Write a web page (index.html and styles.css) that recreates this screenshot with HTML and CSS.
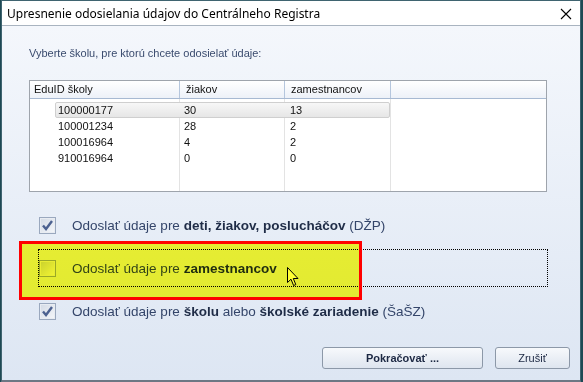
FILE: index.html
```html
<!DOCTYPE html>
<html lang="sk">
  <head>
    <meta charset="UTF-8" />
    <title>Upresnenie odosielania údajov do Centrálneho Registra</title>
    <link rel="stylesheet" href="styles.css">
  </head>
  <body>
    <div class="window">
      <div class="titlebar">
        <span class="title">Upresnenie odosielania údajov do Centrálneho Registra</span>
        <svg class="close" width="12" height="12" viewBox="0 0 12 12">
          <path d="M1 1 L11 11 M11 1 L1 11" stroke="#000" stroke-width="1.1" fill="none" />
        </svg>
      </div>
      <div class="client">
        <p class="hint">Vyberte školu, pre ktorú chcete odosielať údaje:</p>

        <div class="listview">
          <div class="lv-head">
            <div class="col c1">EduID školy</div>
            <div class="col c2">žiakov</div>
            <div class="col c3">zamestnancov</div>
            <div class="col fill"></div>
          </div>
          <div class="lv-body">
            <div class="row hot"><span>100000177</span><span>30</span><span>13</span></div>
            <div class="row"><span>100001234</span><span>28</span><span>2</span></div>
            <div class="row"><span>100016964</span><span>4</span><span>2</span></div>
            <div class="row"><span>910016964</span><span>0</span><span>0</span></div>
          </div>
        </div>

        <div class="options">
          <label class="opt">
            <span class="box checked">
              <svg width="15" height="15" viewBox="0 0 15 15"><path d="M3 7.5 L6 11 L12 3" /></svg>
            </span>
            <span class="text">Odoslať údaje pre <b>deti, žiakov, poslucháčov</b> (DŽP)</span>
          </label>
          <label class="opt focused">
            <span class="box"></span>
            <span class="text">Odoslať údaje pre <b>zamestnancov</b></span>
            <!-- mouse pointer -->
            <svg class="pointer" width="13" height="20" viewBox="0 0 13 20">
              <path d="M0.5 0.5 L0.5 15.5 L4 12.2 L6.6 18.5 L8.8 17.6 L6.3 11.5 L11 11.5 Z" fill="#fff" stroke="#000" stroke-width="1" stroke-linejoin="miter" />
            </svg>
            <!-- highlighter annotation -->
            <span class="mark"></span>
          </label>
          <label class="opt">
            <span class="box checked">
              <svg width="15" height="15" viewBox="0 0 15 15"><path d="M3 7.5 L6 11 L12 3" /></svg>
            </span>
            <span class="text">Odoslať údaje pre <b>školu</b> alebo <b>školské zariadenie</b> (ŠaŠZ)</span>
          </label>
        </div>

        <div class="buttons">
          <button class="btn primary" type="button">Pokračovať ...</button>
          <button class="btn cancel" type="button">Zrušiť</button>
        </div>
      </div>
    </div>
  </body>
</html>
```

FILE: styles.css
```css
body {
  margin: 0;
  background-color: #1e4954;
  font-family: "Liberation Sans", Arial, sans-serif;
}
.window {
  width: 580px;
  height: 382px;
  margin-left: 1px;
  box-sizing: border-box;
  border: 1px solid #3f6470;
  border-bottom: 2px solid #6d7784;
  display: flex;
  flex-direction: column;
}
.titlebar {
  height: 24px;
  background-color: #ffffff;
  border-bottom: 1px solid #a9b4c0;
  display: flex;
  align-items: center;
  justify-content: space-between;
  padding: 0 8px 0 5px;
}
.title {
  font-family: "Noto Sans", sans-serif;
  font-size: 12px;
  color: #000;
  margin-top: 1px;
}
.close {
  display: block;
  margin-top: 1px;
}
.client {
  flex: 1;
  display: flex;
  flex-direction: column;
  padding: 0 10px 11px 27px;
  background: linear-gradient(#f4f7fc, #dde6f3);
}
.hint {
  margin: 21px 0 0 0;
  font-size: 11px;
  line-height: 13px;
  color: #3a4b6e;
}

/* list view */
.listview {
  margin-top: 20px;
  width: 518px;
  height: 112px;
  box-sizing: border-box;
  border: 1px solid #9ea4ac;
  background-color: #fff;
  display: flex;
  flex-direction: column;
  font-size: 11px;
  color: #111;
}
.lv-head {
  display: flex;
  height: 17px;
  background: linear-gradient(#ffffff, #edf1f8);
  border-bottom: 1px solid #a7b9d2;
}
.col {
  box-sizing: border-box;
  border-right: 1px solid #b5c6dd;
  line-height: 17px;
  padding-left: 6px;
}
.c1 { width: 150px; padding-left: 4px; }
.c2 { width: 105px; }
.c3 { width: 106px; }
.fill { flex: 1; border-right: none; }
.lv-body {
  flex: 1;
  padding-top: 3px;
  background:
    linear-gradient(#e3e3e3, #e3e3e3) 149px 0 / 1px 100% no-repeat,
    linear-gradient(#e3e3e3, #e3e3e3) 254px 0 / 1px 100% no-repeat,
    linear-gradient(#e3e3e3, #e3e3e3) 360px 0 / 1px 100% no-repeat;
}
.row {
  display: grid;
  grid-template-columns: 126px 106px 103px;
  margin-left: 25px;
  width: 335px;
  height: 16px;
  line-height: 16px;
  box-sizing: border-box;
}
.row span {
  padding-left: 3px;
}
.row.hot {
  background: linear-gradient(#f7f7f7, #e6e6e6);
  border: 1px solid #cfcfcf;
  border-radius: 2px;
  line-height: 14px;
}
.row.hot span {
  padding-left: 2px;
}

/* check boxes */
.options {
  margin: 14px 0 0 9px;
  width: 510px;
  display: flex;
  flex-direction: column;
  gap: 5px;
}
.opt {
  position: relative;
  height: 38px;
  box-sizing: border-box;
  border: 1px solid transparent;
  display: flex;
  align-items: center;
  gap: 16px;
  font-size: 13.5px;
  color: #34456a;
}
.opt b {
  color: #1f2c47;
}
.opt.focused {
  border: 1px dotted #000;
}
.box {
  width: 17px;
  height: 17px;
  flex: none;
  box-sizing: border-box;
  border: 1px solid #9aa8be;
  background: linear-gradient(135deg, #c9d1dd, #f3f5f9);
  box-shadow: inset 0 0 0 1px #e8ecf2;
  display: flex;
  align-items: center;
  justify-content: center;
}
.box.checked {
  background: linear-gradient(135deg, #d3dae5, #f5f7fa);
}
.box svg path {
  fill: none;
  stroke: #4c6190;
  stroke-width: 2.4;
}
.pointer {
  position: absolute;
  left: 248px;
  top: 17px;
}
.mark {
  position: absolute;
  left: -20px;
  top: -9px;
  width: 343px;
  height: 59px;
  box-sizing: border-box;
  border: 3px solid #ff0000;
}
.mark::before {
  content: "";
  position: absolute;
  inset: 0;
  background-color: #ffff34;
  mix-blend-mode: multiply;
}

/* buttons */
.buttons {
  margin-top: auto;
  display: flex;
  justify-content: flex-end;
  gap: 12px;
}
.btn {
  height: 22px;
  border: 1px solid #8c98a8;
  border-radius: 3px;
  background: linear-gradient(#f7f9fc, #dee5ef);
  font-family: "Liberation Sans", Arial, sans-serif;
  font-size: 11px;
  color: #1c2843;
  padding: 0;
}
.primary {
  width: 161px;
  font-weight: bold;
}
.cancel {
  width: 75px;
}
```
